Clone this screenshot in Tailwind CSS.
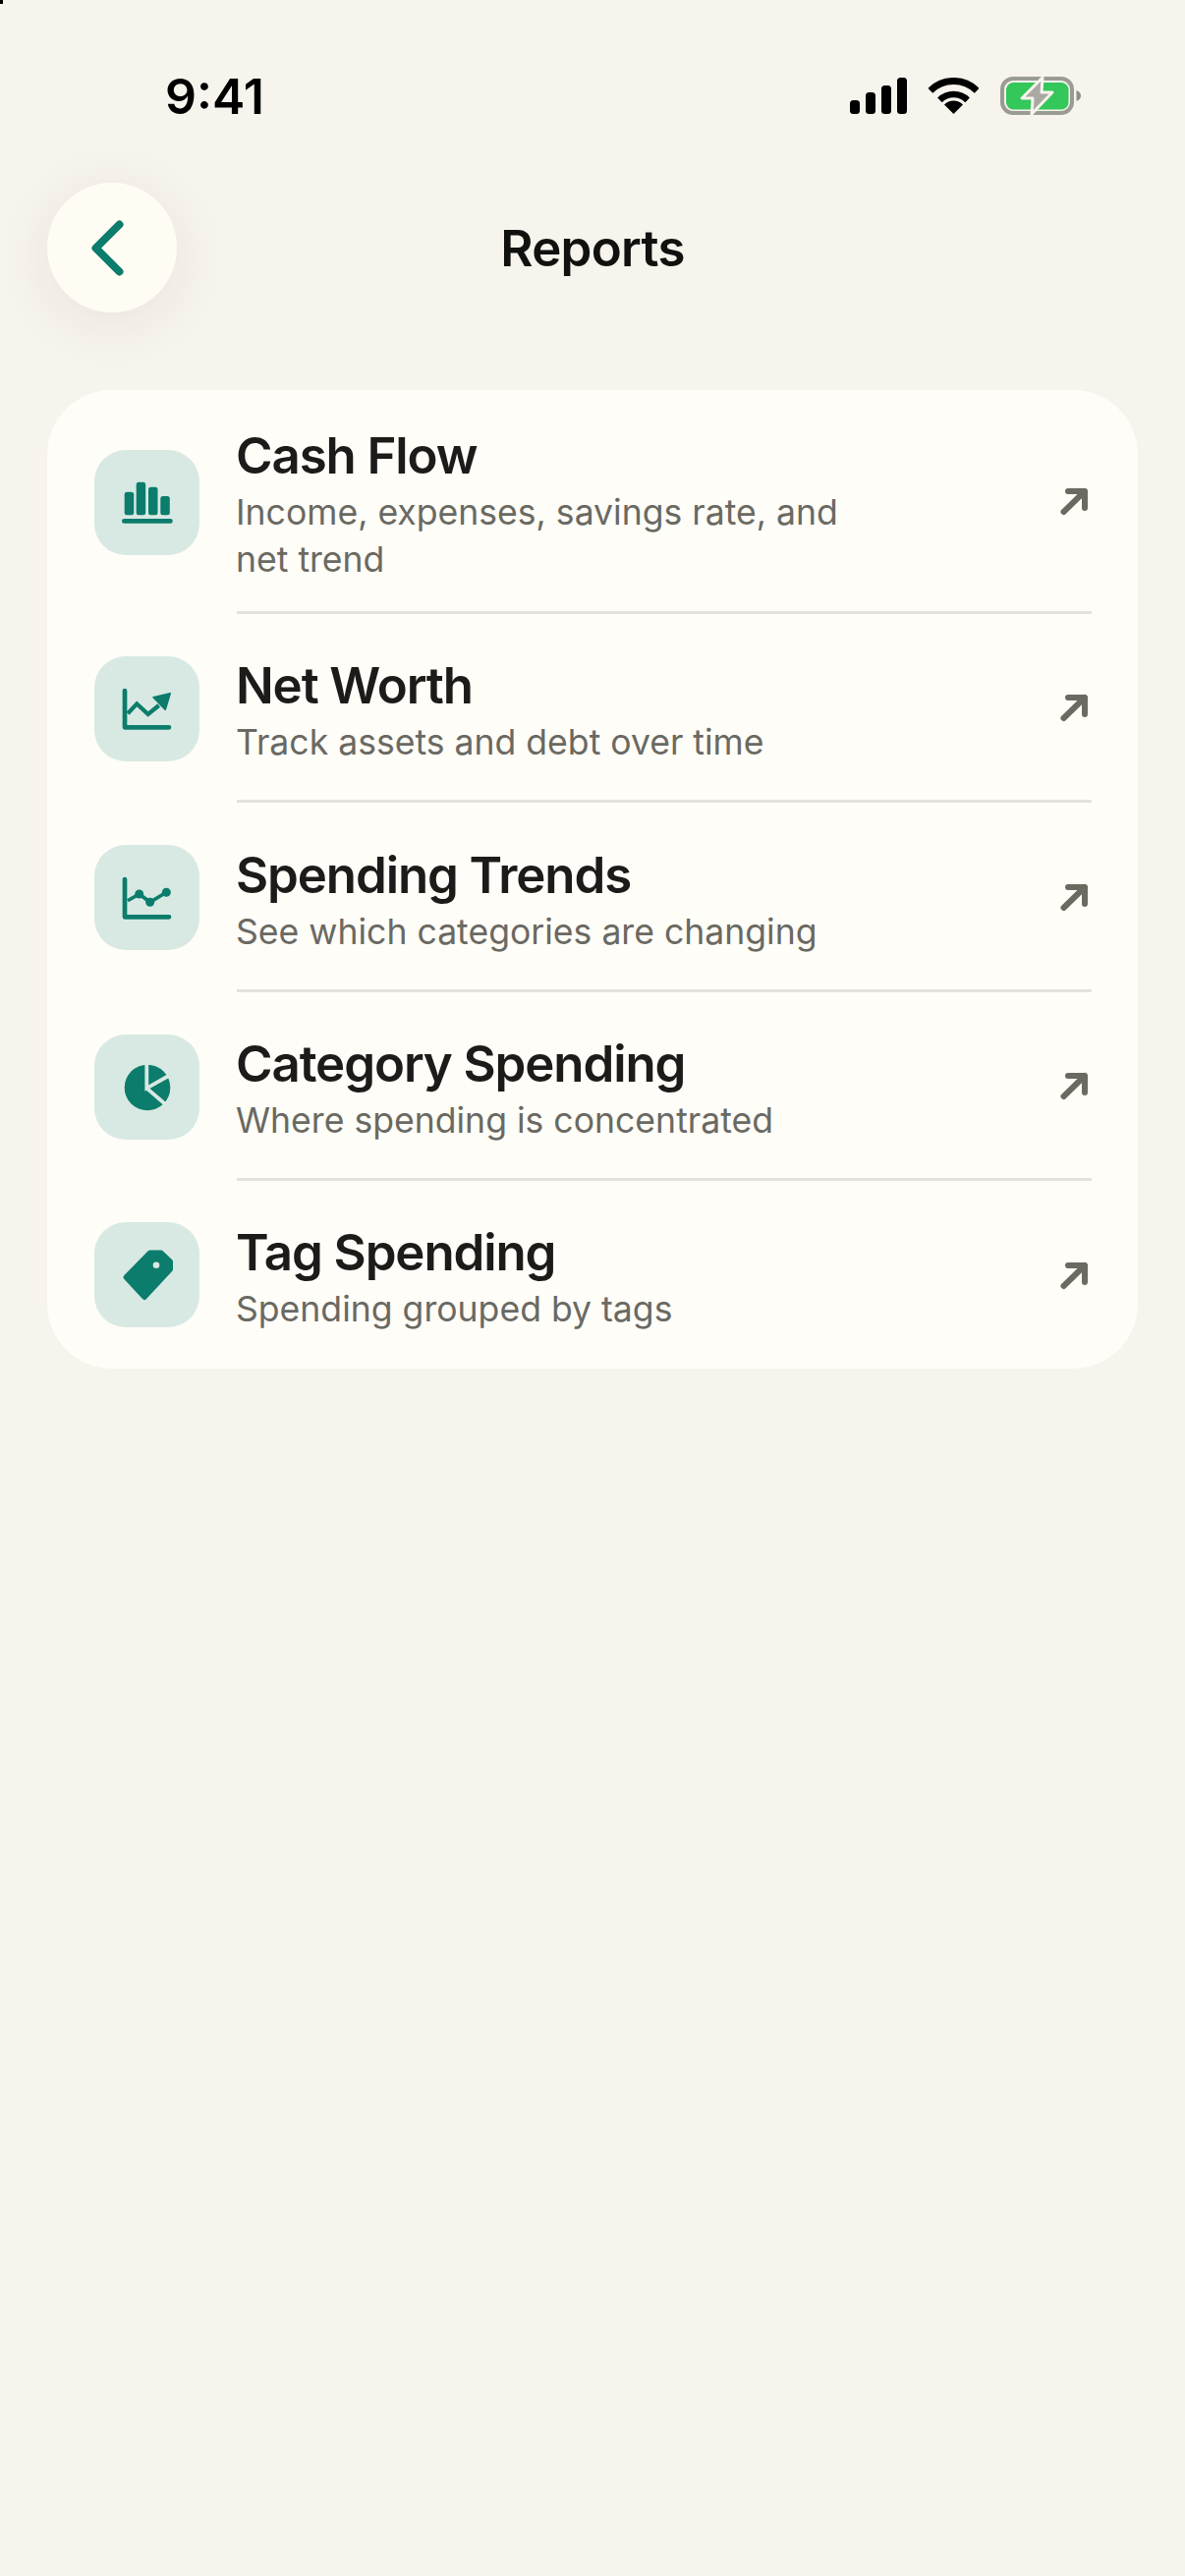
<!DOCTYPE html>
<html>
<head>
<meta charset="utf-8">
<script src="https://cdn.jsdelivr.net/npm/@tailwindcss/browser@4"></script>
</head>
<body class="m-0">
<div class="relative w-[1206px] h-[2622px] overflow-hidden bg-[#f7f3ed] font-['Inter','Liberation_Sans',sans-serif]">
  <div class="absolute left-0 top-0 w-[3px] h-[4px] bg-black"></div>

  <!-- status bar -->
  <div class="flex items-center justify-between h-[186px] pt-[9px] pl-[168px] pr-[106px]">
    <span class="text-[50px] leading-[60px] font-semibold text-black">9:41</span>
    <div class="flex items-center gap-[22px]">
      <svg width="58" height="37" viewBox="0 0 58 37" fill="#000">
        <rect x="0" y="23" width="10" height="14" rx="3.5"/><rect x="16" y="15" width="10" height="22" rx="3.5"/><rect x="32" y="8" width="10" height="29" rx="3.5"/><rect x="48" y="0" width="10" height="37" rx="3.5"/>
      </svg>
      <svg width="51" height="37" viewBox="0 0 51 37" fill="none">
        <path d="M1.8 13.3 A33.5 33.5 0 0 1 49.2 13.3" stroke="#000" stroke-width="7"/>
        <path d="M11.4 22.9 A20 20 0 0 1 39.6 22.9" stroke="#000" stroke-width="6.5"/>
        <path d="M25.5 37 L16 27.5 A13.4 13.4 0 0 1 35 27.5 Z" fill="#000"/>
      </svg>
      <svg width="82" height="39" viewBox="0 0 82 39" fill="none">
        <rect x="2" y="2" width="71" height="35" rx="11" stroke="#9b9b95" stroke-width="4"/>
        <rect x="6" y="6" width="63.5" height="27.5" rx="7.5" fill="#34c759"/>
        <path d="M77.5 14 C80.5 15 82 17 82 19.5 C82 22 80.5 24 77.5 25 Z" fill="#8f8f89"/>
        <path d="M43 1 L22 22 L33 22 L32 38 L53 16 L42 16 Z" fill="#a9a9a3" stroke="#f7f3ed" stroke-width="3" stroke-linejoin="round"/>
      </svg>
    </div>
  </div>

  <!-- header -->
  <div class="relative flex items-center justify-center h-[132px] mx-[48px]">
    <div class="absolute left-0 top-0 w-[132px] h-[132px] rounded-full bg-[#fffdf3] shadow-[0_10px_60px_rgba(70,60,40,0.08)]">
      <svg width="132" height="132" viewBox="0 0 132 132" fill="none"><path d="M73.5 42.5 L49.5 66.5 L73.5 90.5" stroke="#0c7c6c" stroke-width="8" stroke-linecap="round" stroke-linejoin="round"/></svg>
    </div>
    <h1 class="pt-[2px] text-[51px] leading-[60px] font-semibold tracking-[-0.7px] text-[#111110]">Reports</h1>
  </div>

  <!-- card -->
  <div class="mt-[79px] mx-[48px] rounded-[66px] bg-[#fffdf8] flex flex-col">
    <!-- row 1 -->
    <div class="flex items-center h-[228px] pl-[48px] pr-[47px]">
      <div class="shrink-0 w-[107px] h-[107px] rounded-[32px] bg-[#d8e9e3]">
        <svg width="107" height="107" viewBox="0 0 107 107" fill="#0c7c6c">
          <rect x="30.7" y="42.7" width="9.5" height="23.5" rx="2.5"/><rect x="42.7" y="32.7" width="9.5" height="33.5" rx="2.5"/><rect x="55" y="37.7" width="9.5" height="28.5" rx="2.5"/><rect x="67.3" y="47" width="9.5" height="19.2" rx="2.5"/><rect x="28" y="70" width="51.7" height="4.7" rx="2.3"/>
        </svg>
      </div>
      <div class="flex items-center justify-between self-stretch flex-1 ml-[38px] border-b-[3px] border-[#e3e2de]">
        <div class="pt-[5px] -ml-[1px]">
          <div class="text-[51px] leading-[68px] font-semibold tracking-[-1.1px] text-[#1c1b19]">Cash Flow</div>
          <div class="text-[35.6px] leading-[48px] text-[#6a6962] w-[640px]">Income, expenses, savings rate, and net trend</div>
        </div>
        <svg class="shrink-0" width="37" height="37" viewBox="0 0 37 37" fill="none"><path d="M8.5 30 L30 9 M13 9 L30 9 L30 26" stroke="#6b6a60" stroke-width="6" stroke-linecap="round" stroke-linejoin="round"/></svg>
      </div>
    </div>
    <!-- row 2 -->
    <div class="flex items-center h-[192px] pl-[48px] pr-[47px]">
      <div class="shrink-0 w-[107px] h-[107px] rounded-[32px] bg-[#d8e9e3]">
        <svg width="107" height="107" viewBox="0 0 107 107" fill="none">
          <path d="M31 35 L31 72.3 L76 72.3" stroke="#0c7c6c" stroke-width="4.7" stroke-linecap="round" stroke-linejoin="round"/>
          <path d="M34 58.3 L43.3 48.4 L54.7 59 L65.7 50" stroke="#0c7c6c" stroke-width="4.2"/>
          <path d="M60 41.7 L77.3 37.7 L72.3 54.4 Z" fill="#0c7c6c" stroke="#0c7c6c" stroke-width="1.5" stroke-linejoin="round"/>
        </svg>
      </div>
      <div class="flex items-center justify-between self-stretch flex-1 ml-[38px] border-b-[3px] border-[#e3e2de]">
        <div class="pt-[5px] -ml-[1px]">
          <div class="text-[51px] leading-[68px] font-semibold tracking-[-1.1px] text-[#1c1b19]">Net Worth</div>
          <div class="text-[35.6px] leading-[48px] text-[#6a6962]">Track assets and debt over time</div>
        </div>
        <svg class="shrink-0" width="37" height="37" viewBox="0 0 37 37" fill="none"><path d="M8.5 30 L30 9 M13 9 L30 9 L30 26" stroke="#6b6a60" stroke-width="6" stroke-linecap="round" stroke-linejoin="round"/></svg>
      </div>
    </div>
    <!-- row 3 -->
    <div class="flex items-center h-[193px] pl-[48px] pr-[47px]">
      <div class="shrink-0 w-[107px] h-[107px] rounded-[32px] bg-[#d8e9e3]">
        <svg width="107" height="107" viewBox="0 0 107 107" fill="#0c7c6c">
          <path d="M31 35 L31 73.3 L76 73.3" fill="none" stroke="#0c7c6c" stroke-width="4.7" stroke-linecap="round" stroke-linejoin="round"/>
          <path d="M34 56.7 L45.7 50 L56.7 58.3 L73.3 48.3" fill="none" stroke="#0c7c6c" stroke-width="3.6"/>
          <circle cx="45.7" cy="50" r="4.5"/><circle cx="56.7" cy="58.3" r="4.5"/><circle cx="73.3" cy="48.3" r="4.5"/>
        </svg>
      </div>
      <div class="flex items-center justify-between self-stretch flex-1 ml-[38px] border-b-[3px] border-[#e3e2de]">
        <div class="pt-[5px] -ml-[1px]">
          <div class="text-[51px] leading-[68px] font-semibold tracking-[-1.1px] text-[#1c1b19]">Spending Trends</div>
          <div class="text-[35.6px] leading-[48px] text-[#6a6962]">See which categories are changing</div>
        </div>
        <svg class="shrink-0" width="37" height="37" viewBox="0 0 37 37" fill="none"><path d="M8.5 30 L30 9 M13 9 L30 9 L30 26" stroke="#6b6a60" stroke-width="6" stroke-linecap="round" stroke-linejoin="round"/></svg>
      </div>
    </div>
    <!-- row 4 -->
    <div class="flex items-center h-[192px] pl-[48px] pr-[47px]">
      <div class="shrink-0 w-[107px] h-[107px] rounded-[32px] bg-[#d8e9e3]">
        <svg width="107" height="107" viewBox="0 0 107 107" fill="none">
          <circle cx="54" cy="54" r="23.3" fill="#0c7c6c"/>
          <path d="M53.3 26 L53.3 54.6 L77.5 41 M53.3 54.6 L73.5 72" stroke="#d8e9e3" stroke-width="3.8" stroke-linejoin="miter"/>
        </svg>
      </div>
      <div class="flex items-center justify-between self-stretch flex-1 ml-[38px] border-b-[3px] border-[#e3e2de]">
        <div class="pt-[4px] -ml-[1px]">
          <div class="text-[51px] leading-[68px] font-semibold tracking-[-1.1px] text-[#1c1b19]">Category Spending</div>
          <div class="text-[35.6px] leading-[48px] text-[#6a6962]">Where spending is concentrated</div>
        </div>
        <svg class="shrink-0" width="37" height="37" viewBox="0 0 37 37" fill="none"><path d="M8.5 30 L30 9 M13 9 L30 9 L30 26" stroke="#6b6a60" stroke-width="6" stroke-linecap="round" stroke-linejoin="round"/></svg>
      </div>
    </div>
    <!-- row 5 -->
    <div class="flex items-center h-[191px] pl-[48px] pr-[47px]">
      <div class="shrink-0 w-[107px] h-[107px] rounded-[32px] bg-[#d8e9e3]">
        <svg width="107" height="107" viewBox="0 0 107 107" fill="none">
          <path d="M32 56 L56.5 31 L68 31 L77.5 40 L77.5 48 L51 76.5 Z" fill="#0c7c6c" stroke="#0c7c6c" stroke-width="5" stroke-linejoin="round"/>
          <circle cx="63" cy="43.7" r="3.3" fill="#d8e9e3"/>
        </svg>
      </div>
      <div class="flex items-center justify-between self-stretch flex-1 ml-[38px]">
        <div class="pt-[2px] -ml-[1px]">
          <div class="text-[51px] leading-[68px] font-semibold tracking-[-1.1px] text-[#1c1b19]">Tag Spending</div>
          <div class="text-[35.6px] leading-[48px] text-[#6a6962]">Spending grouped by tags</div>
        </div>
        <svg class="shrink-0" width="37" height="37" viewBox="0 0 37 37" fill="none"><path d="M8.5 30 L30 9 M13 9 L30 9 L30 26" stroke="#6b6a60" stroke-width="6" stroke-linecap="round" stroke-linejoin="round"/></svg>
      </div>
    </div>
  </div>
</div>
</body>
</html>
